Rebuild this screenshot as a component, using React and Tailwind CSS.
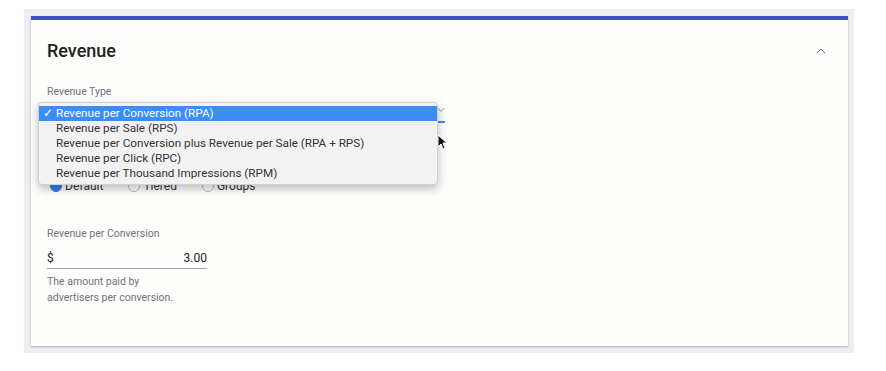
import { ChevronUp, ChevronDown } from "lucide-react";

const options = [
  "Revenue per Conversion (RPA)",
  "Revenue per Sale (RPS)",
  "Revenue per Conversion plus Revenue per Sale (RPA + RPS)",
  "Revenue per Click (RPC)",
  "Revenue per Thousand Impressions (RPM)",
];

const Radio = ({ label, checked }) => (
  <label className="flex items-center gap-[3px] text-[12px] text-[#333]">
    <span
      className={
        checked
          ? "w-[12px] h-[12px] rounded-full bg-[#2f7ee8] border border-[#2f7ee8]"
          : "w-[12px] h-[12px] rounded-full border border-[#b9bcc2] bg-white"
      }
    ></span>
    {label}
  </label>
);

const App = () => {
  return (
    <div
      className="w-[886px] h-[371px] bg-white pt-[9px] pl-[24px]"
      style={{ fontFamily: "Roboto, 'Liberation Sans', sans-serif" }}
    >
      <div className="w-[830px] h-[344px] bg-[#eceef1] pt-[7px] pl-[7px] pr-[6px] pb-[7px]">
        <div className="relative h-full bg-[#fdfdfb] border-t-4 border-[#3a4fc5] shadow-[0_1px_2px_rgba(0,0,0,0.25)]">
          <div className="flex items-center justify-between pl-4 pr-[19px] pt-[19px]">
            <h2 className="text-[18px] font-medium text-[#222] leading-[24px]">Revenue</h2>
            <ChevronUp size={16} strokeWidth={1.5} className="text-[#6b7078]" />
          </div>

          <div className="pl-4 pt-[22px]">
            <p className="text-[10.5px] text-[#6f737a] leading-[14px]">Revenue Type</p>
            <div className="relative w-[398px] h-[24px] border-b-2 border-[#3d8ef5] flex items-center justify-end">
              <ChevronDown size={12} className="text-[#8a8f96] mr-[-2px]" />
            </div>

            <div className="mt-[54px] flex items-center gap-[25px] pl-[3px]">
              <Radio label="Default" checked />
              <Radio label="Tiered" />
              <Radio label="Groups" />
            </div>

            <p className="mt-[32px] text-[10.5px] text-[#6f737a] leading-[14px]">
              Revenue per Conversion
            </p>
            <div className="mt-[6px] w-[160px] h-[22px] border-b border-[#9ea2a8] flex items-center justify-between text-[12px] text-[#222]">
              <span>$</span>
              <span>3.00</span>
            </div>
            <p className="mt-[5px] text-[10.5px] text-[#6f737a] leading-[16px]">
              The amount paid by
              <br />
              advertisers per conversion.
            </p>
          </div>

          <div
            className="absolute left-[7px] top-[82px] w-[400px] bg-[#f2f2f2] border border-[#d0d0d0] rounded-[4px] shadow-[0_4px_10px_rgba(0,0,0,0.25)] py-[3px] text-[11.7px] leading-[15px] text-[#333]"
          >
            {options.map((o, i) => (
              <div
                key={o}
                className={
                  i === 0
                    ? "flex bg-[#3b8df2] text-white pl-[4px]"
                    : "flex pl-[4px]"
                }
              >
                <span className="w-[13px]">{i === 0 ? "✓" : ""}</span>
                <span>{o}</span>
              </div>
            ))}
          </div>

          <svg
            className="absolute left-[406px] top-[114px]"
            width="11"
            height="17"
            viewBox="0 0 11 17"
          >
            <path
              d="M1 1 L1 13 L4 10 L6 15 L8 14 L6 9 L10 9 Z"
              fill="#111"
              stroke="#fff"
              strokeWidth="1"
            />
          </svg>
        </div>
      </div>
    </div>
  );
};

export default App;
